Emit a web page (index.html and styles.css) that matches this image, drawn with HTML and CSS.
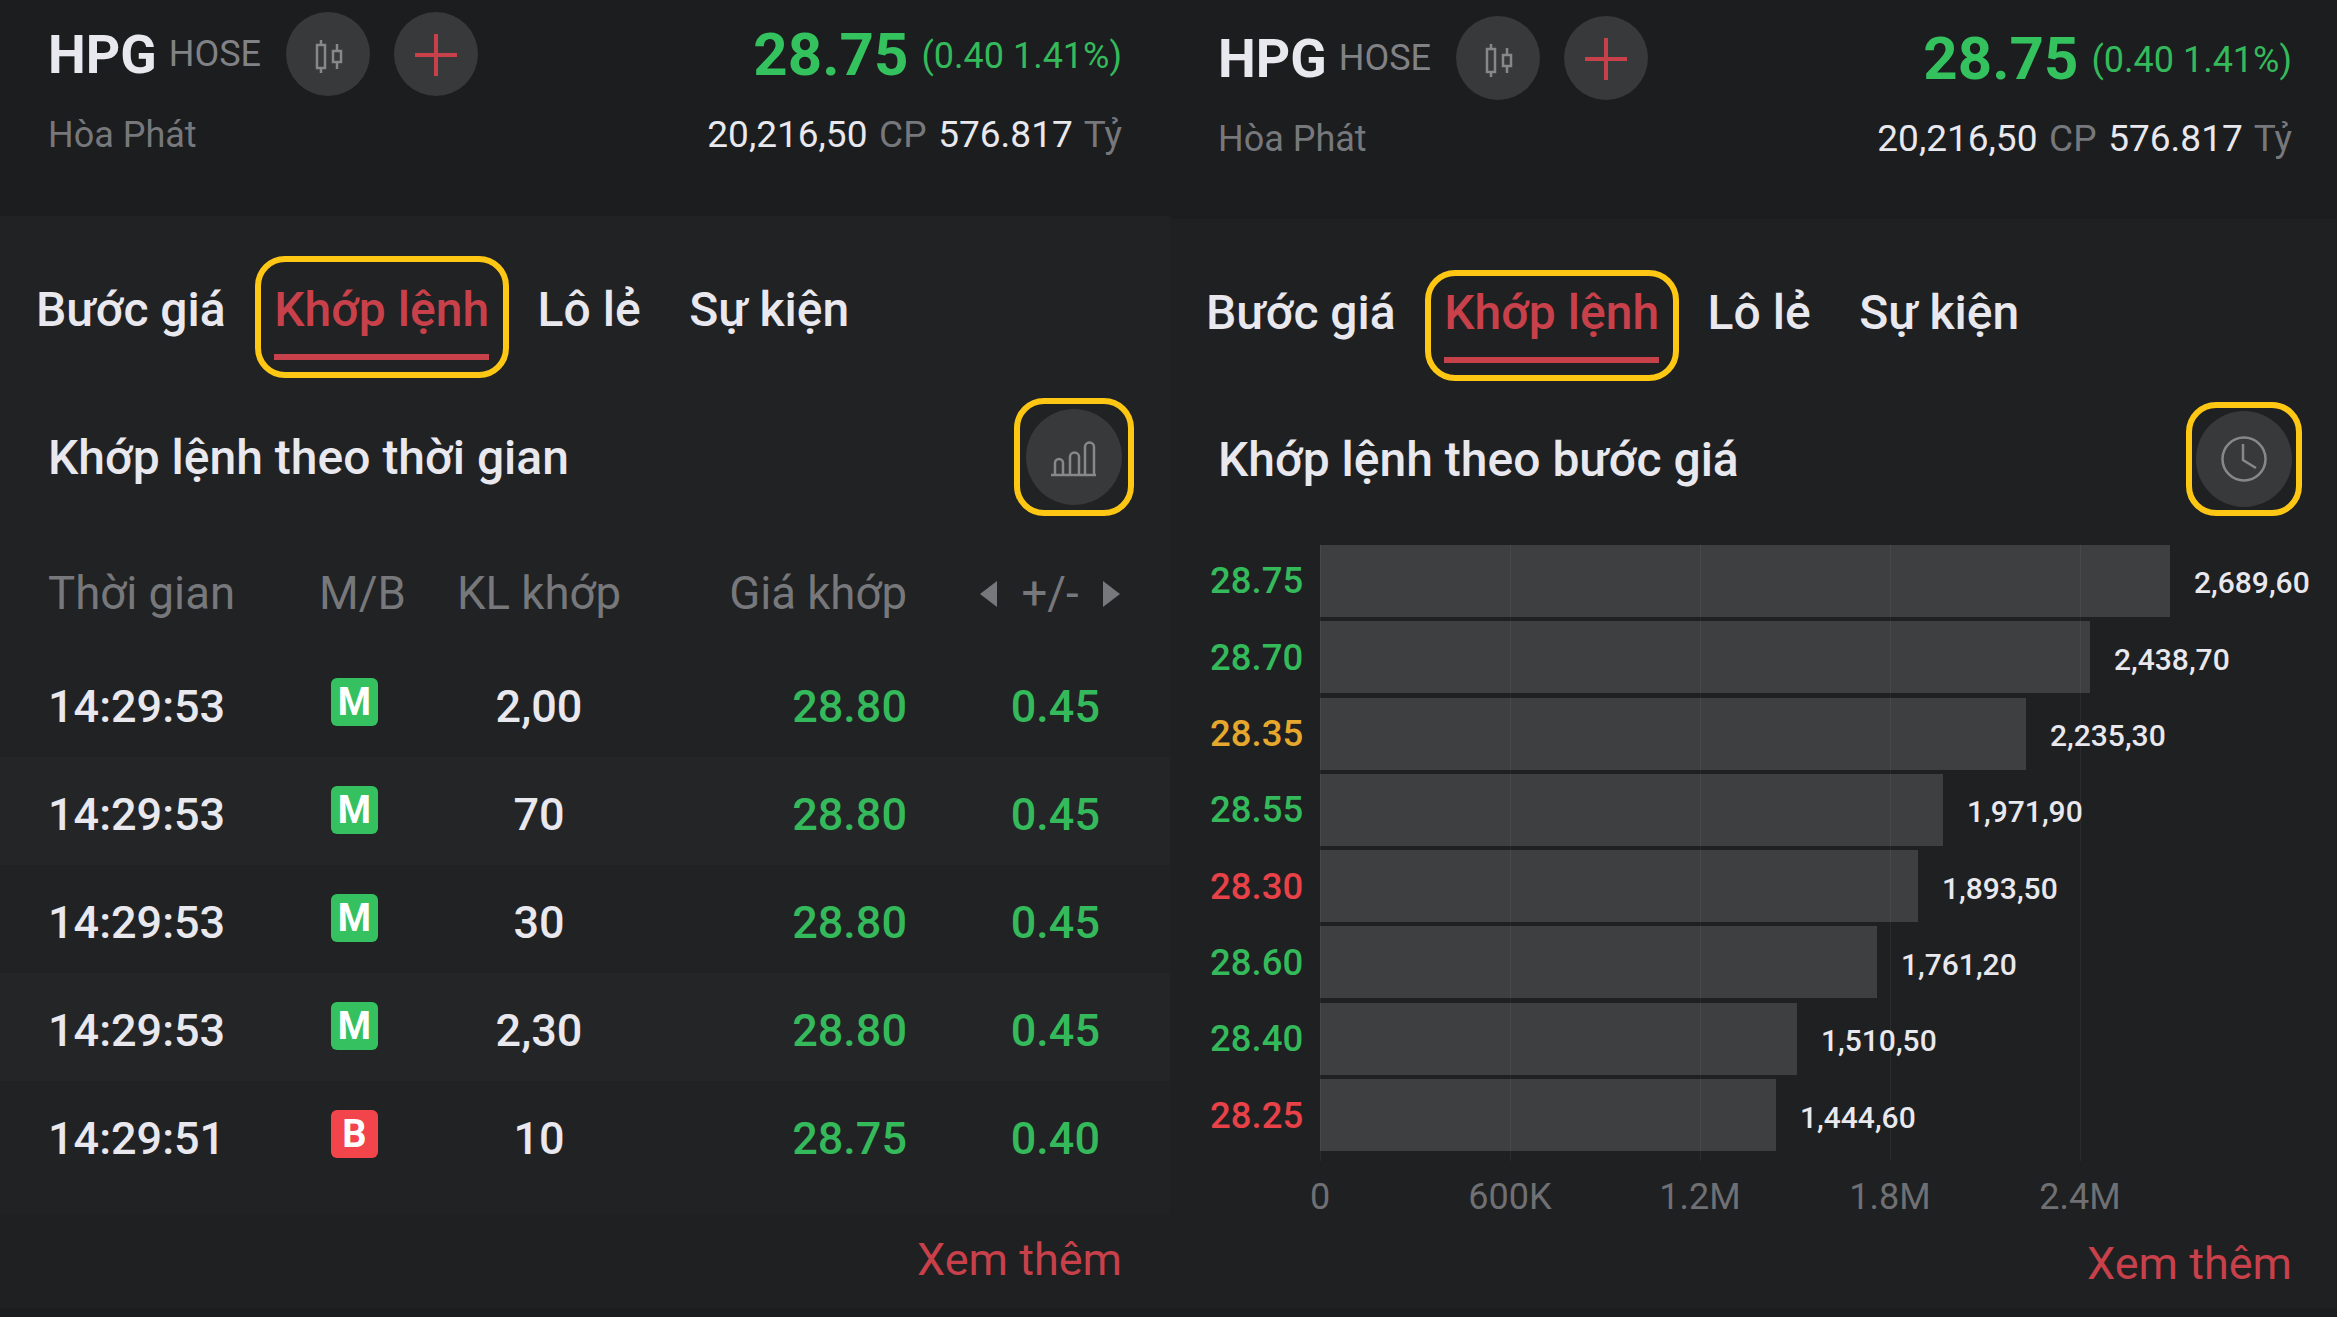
FILE: index.html
```html
<!DOCTYPE html>
<html lang="vi">
<head>
  <meta charset="UTF-8" />
  <title>HPG - Khớp lệnh</title>
  <link rel="stylesheet" href="styles.css">
</head>
<body>
<div class="screens">

  <section class="panel panel-left">
    <header class="quote">
      <div class="quote-top">
        <span class="symbol">HPG</span>
        <span class="exchange">HOSE</span>
        <span class="round-btn first">
          <svg width="84" height="84" viewBox="0 0 84 84" fill="none" stroke="#87888a" stroke-width="2.5">
            <rect x="31" y="33" width="8" height="23" /><path d="M35 28v5M35 56v5" />
            <rect x="47" y="39" width="8" height="11" /><path d="M51 32v7M51 50v7" />
          </svg>
        </span>
        <span class="round-btn">
          <svg width="84" height="84" viewBox="0 0 84 84" fill="none" stroke="#c8414a" stroke-width="4">
            <path d="M21 43h42M42 22v42" />
          </svg>
        </span>
        <span class="price">28.75</span>
        <span class="change">(0.40 1.41%)</span>
      </div>
      <div class="quote-bottom">
        <span class="company">Hòa Phát</span>
        <span class="stats">20,216,50 <i>CP</i> 576.817 <i>Tỷ</i></span>
      </div>
    </header>

    <div class="main">
      <nav class="tabs">
        <span class="tab">Bước giá</span>
        <span class="tab active">Khớp lệnh</span>
        <span class="tab">Lô lẻ</span>
        <span class="tab">Sự kiện</span>
      </nav>
      <div class="title-row">
        <h2>Khớp lệnh theo thời gian</h2>
        <span class="marked">
          <span class="round-btn big">
            <svg width="96" height="96" viewBox="0 0 96 96" fill="none" stroke="#87888a" stroke-width="2.5">
              <path d="M25 66h45M29 66V54a4 4 0 0 1 8 0v12M44 66V48a4.500 4.500 0 0 1 9 0v18M59 66V38a4.500 4.500 0 0 1 9 0v28" />
            </svg>
          </span>
        </span>
      </div>

      <div class="table-head">
        <span class="c-time">Thời gian</span>
        <span class="c-side">M/B</span>
        <span class="c-vol">KL khớp</span>
        <span class="c-price">Giá khớp</span>
        <span class="c-diff">
          <b class="arrow-left"></b>+/-<b class="arrow-right"></b>
        </span>
      </div>
      <div class="trow">
        <span class="c-time">14:29:53</span><span class="c-side"><b class="badge buy">M</b></span><span class="c-vol">2,00</span><span class="c-price up">28.80</span><span class="c-diff up">0.45</span>
      </div>
      <div class="trow">
        <span class="c-time">14:29:53</span><span class="c-side"><b class="badge buy">M</b></span><span class="c-vol">70</span><span class="c-price up">28.80</span><span class="c-diff up">0.45</span>
      </div>
      <div class="trow">
        <span class="c-time">14:29:53</span><span class="c-side"><b class="badge buy">M</b></span><span class="c-vol">30</span><span class="c-price up">28.80</span><span class="c-diff up">0.45</span>
      </div>
      <div class="trow">
        <span class="c-time">14:29:53</span><span class="c-side"><b class="badge buy">M</b></span><span class="c-vol">2,30</span><span class="c-price up">28.80</span><span class="c-diff up">0.45</span>
      </div>
      <div class="trow">
        <span class="c-time">14:29:51</span><span class="c-side"><b class="badge sell">B</b></span><span class="c-vol">10</span><span class="c-price up">28.75</span><span class="c-diff up">0.40</span>
      </div>
    </div>
    <footer class="more">Xem thêm</footer>
  </section>

  <section class="panel panel-right">
    <header class="quote">
      <div class="quote-top">
        <span class="symbol">HPG</span>
        <span class="exchange">HOSE</span>
        <span class="round-btn first">
          <svg width="84" height="84" viewBox="0 0 84 84" fill="none" stroke="#87888a" stroke-width="2.5">
            <rect x="31" y="33" width="8" height="23" /><path d="M35 28v5M35 56v5" />
            <rect x="47" y="39" width="8" height="11" /><path d="M51 32v7M51 50v7" />
          </svg>
        </span>
        <span class="round-btn">
          <svg width="84" height="84" viewBox="0 0 84 84" fill="none" stroke="#c8414a" stroke-width="4">
            <path d="M21 43h42M42 22v42" />
          </svg>
        </span>
        <span class="price">28.75</span>
        <span class="change">(0.40 1.41%)</span>
      </div>
      <div class="quote-bottom">
        <span class="company">Hòa Phát</span>
        <span class="stats">20,216,50 <i>CP</i> 576.817 <i>Tỷ</i></span>
      </div>
    </header>

    <div class="main">
      <nav class="tabs">
        <span class="tab">Bước giá</span>
        <span class="tab active">Khớp lệnh</span>
        <span class="tab">Lô lẻ</span>
        <span class="tab">Sự kiện</span>
      </nav>
      <div class="title-row">
        <h2>Khớp lệnh theo bước giá</h2>
        <span class="marked">
          <span class="round-btn big">
            <svg width="96" height="96" viewBox="0 0 96 96" fill="none" stroke="#87888a" stroke-width="2.5">
              <circle cx="48" cy="48" r="21.500" /><path d="M47 33v16l13 8" />
            </svg>
          </span>
        </span>
      </div>

      <div class="chart">
        <div class="grid-lines"><i></i><i></i><i></i><i></i><i></i></div>
        <div class="bar-row"><span class="level up">28.75</span><span class="bar" style="width:850px"></span><span class="amount">2,689,60</span></div>
        <div class="bar-row"><span class="level up">28.70</span><span class="bar" style="width:770px"></span><span class="amount">2,438,70</span></div>
        <div class="bar-row"><span class="level ref">28.35</span><span class="bar" style="width:706px"></span><span class="amount">2,235,30</span></div>
        <div class="bar-row"><span class="level up">28.55</span><span class="bar" style="width:623px"></span><span class="amount">1,971,90</span></div>
        <div class="bar-row"><span class="level down">28.30</span><span class="bar" style="width:598px"></span><span class="amount">1,893,50</span></div>
        <div class="bar-row"><span class="level up">28.60</span><span class="bar" style="width:557px"></span><span class="amount">1,761,20</span></div>
        <div class="bar-row"><span class="level up">28.40</span><span class="bar" style="width:477px"></span><span class="amount">1,510,50</span></div>
        <div class="bar-row"><span class="level down">28.25</span><span class="bar" style="width:456px"></span><span class="amount">1,444,60</span></div>
        <div class="axis"><span>0</span><span>600K</span><span>1.2M</span><span>1.8M</span><span>2.4M</span></div>
      </div>
    </div>
    <footer class="more">Xem thêm</footer>
  </section>

</div>
</body>
</html>
```

FILE: styles.css
```css
html, body { margin: 0; background: #1b1c1e; }
body { font-family: Roboto, "Noto Sans", sans-serif; color: #e8e8ee; overflow: hidden; }
.screens { display: flex; width: 2337px; height: 1317px; }
.panel { display: flex; flex-direction: column; height: 1317px; }
.panel-left { width: 1170px; }
.panel-right { width: 1167px; }

/* quote header */
.quote { background: #1c1d1f; height: 216px; padding: 12px 48px 0 48px; box-sizing: border-box; }
.panel-right .quote { height: 220px; padding: 16px 45px 0 48px; }
.quote-top { display: flex; align-items: center; height: 84px; }
.symbol { font-size: 53.500px; font-weight: 700; margin-right: 12px; color: #e8e8ee; }
.exchange { font-size: 36px; color: #818285; }
.round-btn { display: flex; width: 84px; height: 84px; border-radius: 50%; background: #38393b; flex: none; }
.round-btn + .round-btn { margin-left: 24px; }
.round-btn.first { margin-left: 25px; }
.round-btn.big { width: 96px; height: 96px; }
.price { margin-left: auto; font-size: 60px; font-weight: 700; color: #34c25f; }
.change { margin-left: 13px; font-size: 36px; color: #34b95b; position: relative; top: 2px; }
.quote-bottom { display: flex; justify-content: space-between; align-items: center; margin-top: 17px; font-size: 37px; }
.company { color: #77787b; font-size: 36px; }
.stats { color: #e8e8ee; word-spacing: 2.500px; }
.stats i { font-style: normal; color: #77787b; }

/* tabs */
.main { flex: 1; background: #212224; }
.panel-right .main { background: #1f2022; }
.tabs { display: flex; height: 174px; padding: 40px 0 0 36px; box-sizing: border-box; }
.panel-right .tabs { height: 180px; padding-top: 51px; }
.tab { font-size: 48px; font-weight: 500; line-height: 54px; padding-top: 27px; height: 122px; box-sizing: border-box; margin-right: 48.500px; }
.tab.active { position: relative; color: #c8414a; }
.tab.active::before { content: ""; position: absolute; left: 0; right: 0; top: 98px; height: 6px; background: #c8414a; }
.tab.active::after { content: ""; position: absolute; left: -19px; right: -20px; top: 0; bottom: 0; border: 6px solid #fdc714; border-radius: 30px; }
.panel-right .tab { height: 111px; padding-top: 16px; }
.panel-right .tab.active::before { top: 87px; }

.title-row { display: flex; justify-content: space-between; align-items: center; height: 134px; padding: 0 36px 0 48px; box-sizing: border-box; }
.panel-right .title-row { height: 120px; padding-right: 35px; }
.panel-right h2 { padding-top: 2px; }
h2 { margin: 0; font-size: 48px; font-weight: 500; color: #e8e8ee; }
.marked { display: flex; align-items: center; justify-content: center; width: 120px; height: 118px; box-sizing: border-box; border: 6px solid #fdc714; border-radius: 30px; }
.panel-right .marked { width: 116px; height: 114px; }

/* table */
.table-head, .trow { display: grid; grid-template-columns: 271px 83px 274px 231px 193px; align-items: center; padding-left: 48px; box-sizing: border-box; }
.table-head { height: 125px; padding-top: 14px; font-size: 45.500px; color: #77787b; }
.trow { height: 108px; padding-top: 7px; font-size: 45px; font-weight: 500; }
.trow:nth-of-type(even) { background: #242527; }
.c-vol { text-align: center; }
.c-price { text-align: right; }
.c-diff { text-align: right; }
.up { color: #34b95b; }
.down { color: #e84147; }
.ref { color: #e5a82c; }
.table-head .c-diff { display: flex; justify-content: space-between; align-items: center; margin-left: 73px; margin-right: -20px; }
.arrow-left { width: 0; height: 0; border: 13px solid transparent; border-left: 0; border-right: 17px solid #77787b; }
.arrow-right { width: 0; height: 0; border: 13px solid transparent; border-right: 0; border-left: 17px solid #77787b; }
.badge { display: block; width: 47px; height: 48px; margin-left: 12px; line-height: 48px; border-radius: 6px; color: #fff; font-size: 38px; text-align: center; position: relative; top: -5px; }
.buy { background: #35c15f; }
.sell { background: #f2444b; }

/* chart */
.chart { position: relative; padding-top: 26px; }
.grid-lines { position: absolute; left: 150px; top: 26px; height: 616px; display: flex; }
.grid-lines i { width: 190px; border-left: 1px solid rgba(255,255,255,.05); box-sizing: border-box; }
.bar-row { display: flex; align-items: center; height: 72px; margin-bottom: 4.300px; }
.level { width: 132px; margin-left: 40px; margin-right: -22px; font-size: 36.500px; font-weight: 500; flex: none; box-sizing: border-box; }
.bar { height: 72px; background: #3e3f41; flex: none; }
.amount { margin-left: 24px; padding-top: 4px; font-size: 30px; font-weight: 500; color: #e8e8ee; }
.axis { display: flex; margin: 25px 0 0 55px; font-size: 36px; color: #6f7073; }
.axis span { width: 190px; text-align: center; }

/* footer */
.more { height: 103px; box-sizing: border-box; background: #1f2022; border-bottom: 9px solid #1c1d1f; text-align: right; padding-right: 48px; font-size: 45px; line-height: 91px; color: #c8414a; }
.panel-right .more { height: 99px; padding-right: 45px; }
```
